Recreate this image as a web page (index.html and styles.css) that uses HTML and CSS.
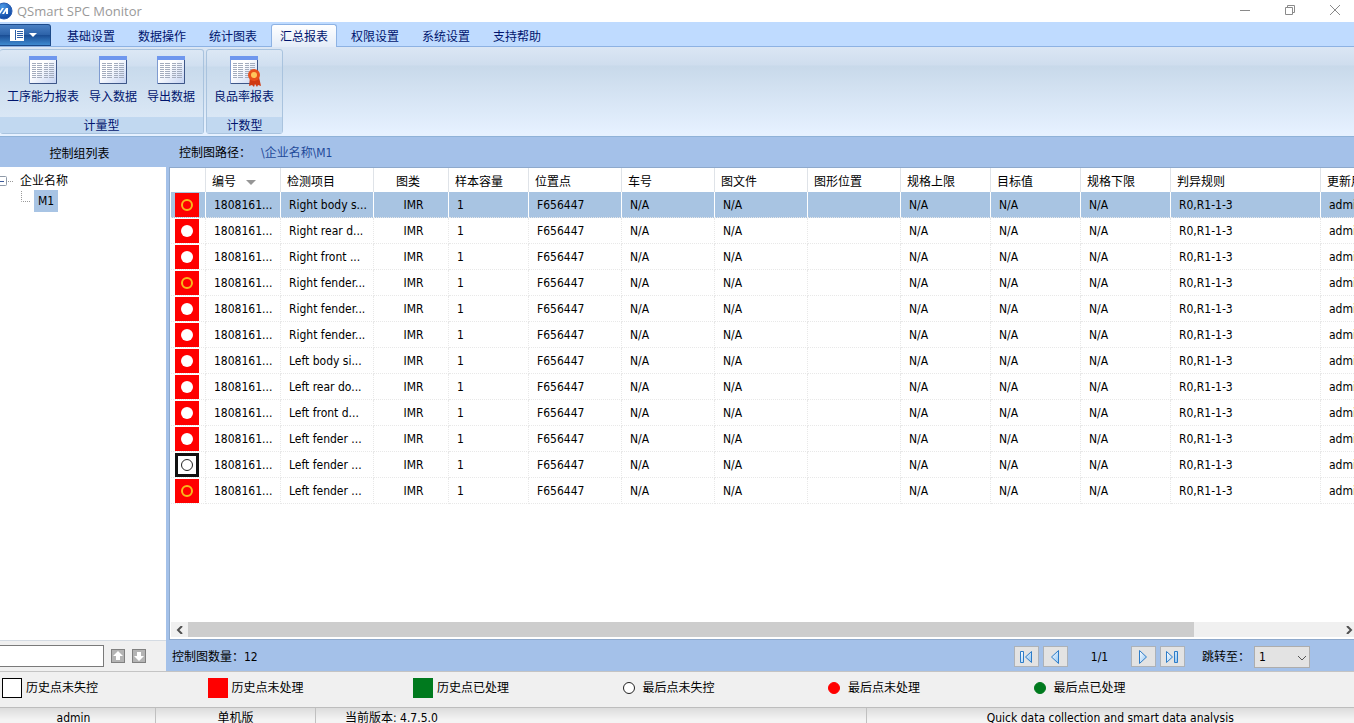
FILE: index.html
```html
<!DOCTYPE html>
<html lang="zh-CN">
<head>
  <meta charset="UTF-8">
  <title>QSmart SPC Monitor</title>
  <meta name="viewport" content="width=device-width, initial-scale=1.0">
  <link rel="stylesheet" href="styles.css">
</head>
<body>

  <!-- shared icons -->
  <svg class="defs" aria-hidden="true">
    <defs>
      <linearGradient id="sheetFill" x1="0" y1="0" x2="1" y2="1">
        <stop offset="0.4" stop-color="#ffffff"/>
        <stop offset="1" stop-color="#c3d2f2"/>
      </linearGradient>
      <linearGradient id="arrowFill" x1="0" y1="0" x2="1" y2="1">
        <stop offset="0" stop-color="#ffffff"/>
        <stop offset="1" stop-color="#8ec4f4"/>
      </linearGradient>
      <radialGradient id="logoFill" cx="0.4" cy="0.25" r="0.8">
        <stop offset="0" stop-color="#4c9be8"/>
        <stop offset="1" stop-color="#0b3f9c"/>
      </radialGradient>
      <symbol id="sheet" viewBox="0 0 28 28">
        <rect x="0.5" y="0.5" width="27" height="27" fill="url(#sheetFill)" stroke="#7f9bd0"/>
        <path d="M27.5 1v26.500H1" fill="none" stroke="#3d5687"/>
        <rect x="0" y="0" width="28" height="4" fill="#6f97ee"/>
        <path d="M3 7.500h22M3 9.500h22M3 11.500h22M3 13.500h22M3 15.500h22M3 17.500h22M3 19.500h22M3 21.500h22" stroke="#a3acbd" stroke-dasharray="4 1 5 2"/>
      </symbol>
    </defs>
  </svg>

  <div class="app">
    <header class="titlebar">
      <svg class="logo" width="13" height="18" viewBox="4 0 13 18">
        <circle cx="8" cy="9" r="8" fill="url(#logoFill)" stroke="#2a5fb4"/>
        <path d="M2 12l4-6h2l-4 6zM6 12l4-6h2v6h-2V9l-2 3z" fill="#fff"/>
      </svg>
      <h1>QSmart SPC Monitor</h1>
      <div class="window-buttons">
        <button aria-label="最小化"><svg width="12" height="12"><path d="M1 6.500h10"/></svg></button>
        <button aria-label="还原"><svg width="12" height="12"><path d="M1.500 3.500h7v7h-7zM3.500 3.500v-2h7v7h-2"/></svg></button>
        <button aria-label="关闭"><svg width="12" height="12"><path d="M1 1l10 10M11 1L1 11"/></svg></button>
      </div>
    </header>

    <nav class="tabs">
      <button class="app-menu" aria-label="菜单">
        <svg width="28" height="12" viewBox="0 0 28 12">
          <path d="M0 0h14v12H0z" fill="#fff"/>
          <path d="M5.500 1v10" stroke="#2c5ea6"/>
          <path d="M7 2.500h6M7 4.500h6M7 6.500h6M7 8.500h6" stroke="#2c5ea6"/>
          <path d="M19 4h8l-4 4z" fill="#fff"/>
        </svg>
      </button>
      <button class="tab">基础设置</button>
      <button class="tab">数据操作</button>
      <button class="tab">统计图表</button>
      <button class="tab active">汇总报表</button>
      <button class="tab">权限设置</button>
      <button class="tab">系统设置</button>
      <button class="tab">支持帮助</button>
    </nav>

    <div class="ribbon">
      <section class="group">
        <div class="group-items">
          <button class="tool"><svg width="28" height="28"><use href="#sheet"/></svg>工序能力报表</button>
          <button class="tool"><svg width="28" height="28"><use href="#sheet"/></svg>导入数据</button>
          <button class="tool"><svg width="28" height="28"><use href="#sheet"/></svg>导出数据</button>
        </div>
        <div class="group-name">计量型</div>
      </section>
      <section class="group">
        <div class="group-items">
          <button class="tool">
            <svg width="28" height="28" overflow="visible">
              <use href="#sheet" width="28" height="28"/>
              <path d="M20 21l-1 9 3-1 2 2 1-3 2 3 1-2 3 1-2-9z" fill="#cf3a12"/>
              <circle cx="24" cy="19" r="6" fill="#e8501c"/>
              <circle cx="24" cy="19" r="3" fill="#ffc65c"/>
            </svg>良品率报表</button>
        </div>
        <div class="group-name">计数型</div>
      </section>
    </div>

    <main class="main">
      <aside class="sidebar">
        <h2 class="bar">控制组列表</h2>
        <ul class="tree">
          <li>
            <svg width="20" height="20" viewBox="0 0 20 20">
              <rect x="-2.500" y="5.500" width="9" height="9" rx="1" fill="#fff" stroke="#8f9aa8"/>
              <path d="M0 10.500h4" stroke="#3c5a9a"/>
              <path d="M8 10.500h5" stroke="#999" stroke-dasharray="1 1"/>
            </svg>
            <a href="#">企业名称</a>
          </li>
          <li>
            <svg width="34" height="20" viewBox="0 0 34 20">
              <path d="M21.500 0v10.500h9" fill="none" stroke="#999" stroke-dasharray="1 1"/>
            </svg>
            <a href="#" class="selected">M1</a>
          </li>
        </ul>
        <div class="find">
          <input type="text" aria-label="查找">
          <button aria-label="上一个"><svg width="10" height="10"><path d="M5 0l5 5H7v4H3V5H0z" fill="#fff"/></svg></button>
          <button aria-label="下一个"><svg width="10" height="10"><path d="M5 10l5-5H7V1H3v4H0z" fill="#fff"/></svg></button>
        </div>
      </aside>

      <section class="content">
        <div class="bar path">控制图路径：<a href="#">\企业名称\M1</a></div>
        <div class="grid">
          <table>
            <colgroup>
              <col class="c-icon"><col class="c-s"><col class="c-l"><col class="c-s"><col class="c-m">
              <col class="c-l"><col class="c-l"><col class="c-l"><col class="c-l">
              <col class="c-n"><col class="c-n"><col class="c-n"><col class="c-xl"><col class="c-l">
            </colgroup>
            <thead>
              <tr>
                <th></th>
                <th>编号<span class="sort"></span></th>
                <th>检测项目</th>
                <th class="center">图类</th>
                <th>样本容量</th>
                <th>位置点</th>
                <th>车号</th>
                <th>图文件</th>
                <th>图形位置</th>
                <th>规格上限</th>
                <th>目标值</th>
                <th>规格下限</th>
                <th>判异规则</th>
                <th>更新用户</th>
              </tr>
            </thead>
            <tbody id="rows"></tbody>
          </table>
        </div>
        <div class="scrollbar">
          <button aria-label="向左"><svg width="8" height="8"><path d="M6 0L2 4l4 4"/></svg></button>
          <div class="track"><div class="thumb"></div></div>
          <button aria-label="向右"><svg width="8" height="8"><path d="M2 0l4 4-4 4"/></svg></button>
        </div>
        <div class="pager">
          <span class="count">控制图数量：12</span>
          <button aria-label="首页"><svg width="14" height="14"><path d="M1.500 1.500h3v11h-3zM12.500 1.500v11L6.500 7z"/></svg></button>
          <button aria-label="上一页"><svg width="14" height="14"><path d="M10.500 0.500v13L3.500 7z"/></svg></button>
          <span class="page">1/1</span>
          <button aria-label="下一页"><svg width="14" height="14"><path d="M3.500 0.500v13l7-6.500z"/></svg></button>
          <button aria-label="末页"><svg width="14" height="14"><path d="M9.500 1.500h3v11h-3zM1.500 1.500v11l6-5.500z"/></svg></button>
          <label for="jump">跳转至：</label>
          <div class="select">
            <select id="jump"><option>1</option></select>
            <svg width="10" height="6"><path d="M1 1l4 4 4-4"/></svg>
          </div>
        </div>
      </section>
    </main>

    <div class="legend">
      <div><i class="box"></i>历史点未失控</div>
      <div><i class="box red"></i>历史点未处理</div>
      <div><i class="box green"></i>历史点已处理</div>
      <div><i class="dot"></i>最后点未失控</div>
      <div><i class="dot red"></i>最后点未处理</div>
      <div><i class="dot green"></i>最后点已处理</div>
    </div>

    <footer class="status">
      <span class="user">admin</span>
      <span class="mode">单机版</span>
      <span class="version">当前版本: 4.7.5.0</span>
      <span class="slogan">Quick data collection and smart data analysis</span>
    </footer>
  </div>

  <script>
    // state: ring = yellow circle, solid = white dot, ok = in control
    const items = [
      ["ring", "Right body s..."],
      ["solid", "Right rear d..."],
      ["solid", "Right front ..."],
      ["ring", "Right fender..."],
      ["solid", "Right fender..."],
      ["solid", "Right fender..."],
      ["solid", "Left body si..."],
      ["solid", "Left rear do..."],
      ["solid", "Left front d..."],
      ["solid", "Left fender ..."],
      ["ok", "Left fender ..."],
      ["ring", "Left fender ..."]
    ];

    document.getElementById("rows").innerHTML = items.map(([state, name], i) => `
      <tr class="${i === 0 ? "selected" : ""}">
        <td class="state"><div class="mark ${state}"><i></i></div></td>
        <td>1808161...</td>
        <td>${name}</td>
        <td class="center">IMR</td>
        <td>1</td>
        <td>F656447</td>
        <td>N/A</td>
        <td>N/A</td>
        <td></td>
        <td>N/A</td>
        <td>N/A</td>
        <td>N/A</td>
        <td>R0,R1-1-3</td>
        <td>admin</td>
      </tr>`).join("");
  </script>

</body>
</html>
```
FILE: styles.css
```css
* {
  box-sizing: border-box;
}

body {
  margin: 0;
  overflow: hidden;
  font-family: "DejaVu Sans Condensed", "Noto Sans CJK SC", sans-serif;
  font-size: 12px;
  line-height: 16px;
  color: #000;
}

button, input, select {
  margin: 0;
  padding: 0;
  font: inherit;
  color: inherit;
}

a {
  color: inherit;
  text-decoration: none;
}

.defs {
  position: absolute;
  width: 0;
  height: 0;
}

.app {
  display: flex;
  flex-direction: column;
  height: 100vh;
  background: #f0f0f0;
}

/* title bar */
.titlebar {
  display: flex;
  align-items: center;
  height: 22px;
  background: #fff;
}

.titlebar h1 {
  margin: 0 0 0 4px;
  font-family: "Open Sans", sans-serif;
  font-size: 13px;
  font-weight: normal;
  color: #999;
}

.window-buttons {
  display: flex;
  align-self: flex-start;
  margin-left: auto;
}

.window-buttons button {
  display: flex;
  align-items: center;
  justify-content: center;
  width: 45px;
  height: 19px;
  padding-left: 6px;
  border: 0;
  background: none;
}

.window-buttons path {
  fill: none;
  stroke: #8a8a8a;
}

/* ribbon */
.tabs {
  display: flex;
  align-items: flex-end;
  gap: 5px;
  height: 25px;
  background: #bfdbff;
  border-bottom: 1px solid #8db2e3;
}

.app-menu {
  display: flex;
  align-items: center;
  width: 51px;
  height: 22px;
  margin-right: 2px;
  padding-left: 10px;
  border: 1px solid #1c4a8a;
  border-left: 0;
  border-radius: 0 3px 0 0;
  background: linear-gradient(#4a80c4, #2c62a8 50%, #1a4d94 51%, #3f8ad0);
}

.tab {
  height: 22px;
  padding: 2px 8px 0;
  border: 1px solid transparent;
  border-bottom: 0;
  border-radius: 3px 3px 0 0;
  background: none;
  color: #00156e;
}

.tab.active {
  height: 23px;
  border-color: #8db2e3;
  background: linear-gradient(#fff, #e3ecf8);
  margin-bottom: -1px;
}

.ribbon {
  display: flex;
  gap: 2px;
  height: 90px;
  padding: 2px 0;
  background: linear-gradient(#dbe6f4, #cfddee 18px, #c8d9ea 19px, #e6f1ff 86px);
  border-bottom: 1px solid #8fb2d8;
}

.group {
  display: flex;
  flex-direction: column;
  border: 1px solid #a9c3de;
  border-radius: 3px;
  background: linear-gradient(#dce8f5, #d0dff0 16px, #c8daec 17px, #dfebf8);
}

.group:first-child {
  border-left: 0;
}

.group-items {
  display: flex;
  flex: 1;
  gap: 10px;
  padding: 6px 8px 0 7px;
}

.tool {
  display: flex;
  flex-direction: column;
  align-items: center;
  gap: 5px;
  border: 0;
  background: none;
  color: #00156e;
}

.group-name {
  height: 16px;
  line-height: 18px;
  text-align: center;
  background: #c1d8f0;
  color: #00156e;
}

/* main area */
.main {
  display: flex;
  flex: 1;
  min-height: 0;
  background: #a4c1e9;
}

.bar {
  height: 30px;
  margin: 0;
  font-size: 12px;
  font-weight: normal;
  line-height: 32px;
  background: #a4c1e9;
}

.sidebar {
  display: flex;
  flex-direction: column;
  width: 166px;
  margin-right: 3px;
  background: #fff;
}

.sidebar .bar {
  padding-right: 7px;
  line-height: 34px;
  text-align: center;
}

.tree {
  flex: 1;
  margin: 0;
  padding: 4px 0;
  list-style: none;
}

.tree li {
  display: flex;
  align-items: center;
  height: 20px;
}

.tree a.selected {
  padding: 3px 4px;
  background: #a8c4e4;
}

.find {
  display: flex;
  align-items: center;
  gap: 7px;
  height: 31px;
  background: #f0f0f0;
  border-top: 1px solid #d4dbe3;
}

.find input {
  width: 104px;
  height: 22px;
  border: 1px solid #7a7a7a;
  border-left: 0;
  background: #fff;
}

.find button {
  display: flex;
  align-items: center;
  justify-content: center;
  width: 14px;
  height: 14px;
  border: 1px solid #808080;
  background: #b4b4b4;
}

.content {
  display: flex;
  flex: 1;
  flex-direction: column;
  min-width: 0;
}

.path {
  padding-left: 10px;
}

.path a {
  margin-left: 10px;
  color: #1f4a9a;
}

.grid {
  flex: 1;
  min-height: 0;
  padding-left: 1px;
  overflow: hidden;
  background: #fff;
  border-top: 1px solid #8ea9cc;
  border-left: 1px solid #8ea9cc;
}

table {
  width: 1242px;
  table-layout: fixed;
  border-collapse: separate;
  border-spacing: 0;
}

.c-icon { width: 35px; }
.c-s { width: 75px; }
.c-m { width: 80px; }
.c-n { width: 90px; }
.c-l { width: 93px; }
.c-xl { width: 150px; }

th {
  height: 24px;
  padding: 3px 0 0 6px;
  font-weight: normal;
  text-align: left;
  white-space: nowrap;
  overflow: hidden;
  border-right: 1px solid #dfe3e8;
}

td {
  height: 26px;
  padding: 0 0 0 8px;
  white-space: nowrap;
  overflow: hidden;
  border-right: 1px dotted #e8e8e8;
  border-bottom: 1px dotted #e8e8e8;
}

th.center, td.center {
  padding-left: 0;
  padding-right: 6px;
  text-align: center;
}

td.center {
  padding-left: 5px;
  padding-right: 0;
}

tr.selected td {
  background: #a8c4e2;
  border-right: 1px solid #fff;
}

.sort {
  display: inline-block;
  margin-left: 10px;
  vertical-align: middle;
  border: 5px solid transparent;
  border-top-color: #969696;
  border-bottom: 0;
}

td.state {
  padding-left: 4px;
}

.mark {
  display: flex;
  align-items: center;
  justify-content: center;
  width: 24px;
  height: 24px;
  background: #f00;
}

.mark i {
  width: 12px;
  height: 12px;
  border-radius: 50%;
}

.ring i { border: 2px solid #f8b81c; }
.solid i { background: #fff; }
.ok i { border: 1px solid #222; }

.mark.ok {
  border: 3px solid #111;
  background: #fff;
}

.scrollbar {
  display: flex;
  height: 19px;
  padding: 1px 0 2px 1px;
  background: #fff;
  border-left: 1px solid #8ea9cc;
  border-bottom: 1px solid #8ea9cc;
}

.scrollbar button {
  display: flex;
  align-items: center;
  justify-content: center;
  width: 17px;
  border: 0;
  background: #f0f0f0;
}

.scrollbar button:last-child {
  width: 10px;
}

.scrollbar path {
  fill: none;
  stroke: #505050;
  stroke-width: 2;
}

.track {
  flex: 1;
  background: #f0f0f0;
}

.thumb {
  width: 87%;
  height: 100%;
  background: #cdcdcd;
}

.pager {
  display: flex;
  align-items: center;
  gap: 4px;
  height: 31px;
  padding: 2px 44px 0 3px;
}

.count {
  margin-right: auto;
}

.pager button {
  display: flex;
  align-items: center;
  justify-content: center;
  width: 25px;
  height: 21px;
  border: 1px solid #adb2b8;
  background: #e3e3e3;
}

.pager button path {
  fill: url(#arrowFill);
  stroke: #2d7cc8;
}

.page {
  width: 55px;
  text-align: center;
}

.pager label {
  margin-left: 13px;
}

.select {
  position: relative;
}

.select select {
  width: 56px;
  height: 22px;
  padding-left: 4px;
  appearance: none;
  border: 1px solid #adadad;
  border-radius: 0;
  background: #e3e3e3;
}

.select svg {
  position: absolute;
  top: 9px;
  right: 3px;
  pointer-events: none;
}

.select path {
  fill: none;
  stroke: #555;
}

/* legend */
.legend {
  display: grid;
  grid-template-columns: repeat(6, 15.2%);
  height: 37px;
  padding: 0 0 3px 2px;
  border-top: 1px solid #c4c4c4;
  border-bottom: 1px solid #bdbdbd;
}

.legend div {
  display: flex;
  align-items: center;
  gap: 4px;
}

.box {
  width: 20px;
  height: 20px;
  background: #fff;
  border: 1px solid #000;
}

.dot {
  width: 12px;
  height: 12px;
  margin: 0 4px;
  border-radius: 50%;
  background: #fff;
  border: 1px solid #222;
}

.legend .red {
  background: #f00;
  border-color: #f00;
}

.legend .green {
  background: #007a1e;
  border-color: #007a1e;
}

/* status bar */
.status {
  display: flex;
  height: 15px;
  overflow: hidden;
  line-height: 21px;
  background: linear-gradient(#dcdcdc, #f4f4f4 12px);
}

.status span {
  text-align: center;
  border-right: 1px solid #c0c0c0;
}

.status .user { width: 156px; padding-right: 8px; }
.status .mode { width: 160px; }
.status .version { flex: 1; padding-left: 29px; text-align: left; }
.status .slogan { width: 36%; border-right: 0; }
```
